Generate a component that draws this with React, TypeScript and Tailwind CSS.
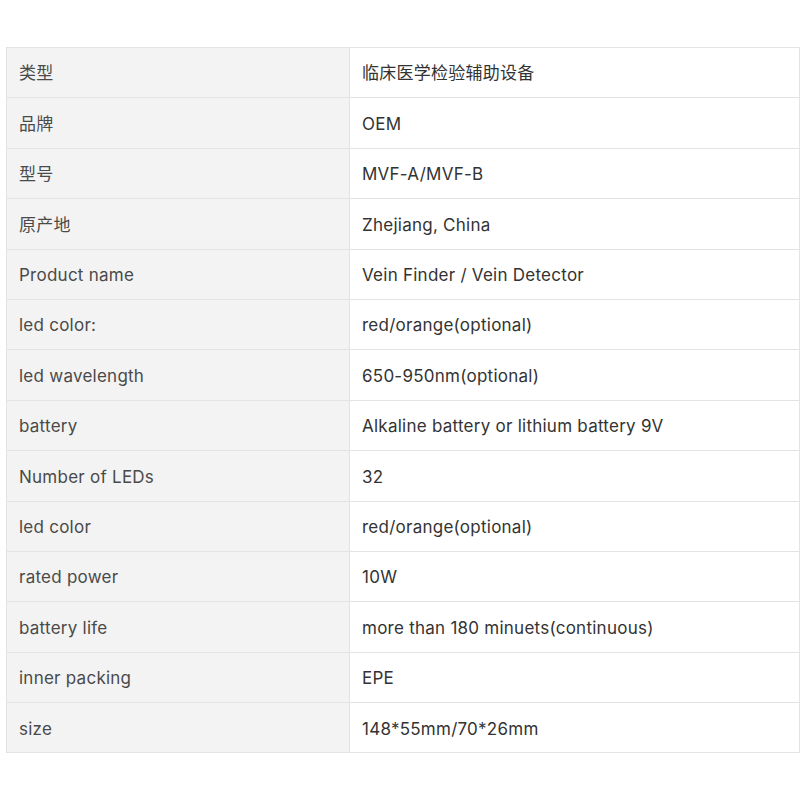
const rows: [string, string][] = [
  ["类型", "临床医学检验辅助设备"],
  ["品牌", "OEM"],
  ["型号", "MVF-A/MVF-B"],
  ["原产地", "Zhejiang, China"],
  ["Product name", "Vein Finder / Vein Detector"],
  ["led color:", "red/orange(optional)"],
  ["led wavelength", "650-950nm(optional)"],
  ["battery", "Alkaline battery or lithium battery 9V"],
  ["Number of LEDs", "32"],
  ["led color", "red/orange(optional)"],
  ["rated power", "10W"],
  ["battery life", "more than 180 minuets(continuous)"],
  ["inner packing", "EPE"],
  ["size", "148*55mm/70*26mm"],
]

export default function App() {
  return (
    <div
      className="w-[800px] h-[800px] bg-white pt-[47px] pl-[6px]"
      style={{ fontFamily: 'Inter, "Noto Sans CJK SC", sans-serif' }}
    >
      <table className="w-[794px] border-collapse text-[17px] tracking-[0.25px] text-[#333]">
        <tbody>
          {rows.map(([k, v], i) => (
            <tr key={i} className="h-[50.4px]">
              <td className="w-[343px] border border-[#e3e3e3] bg-[#f3f3f3] pl-[12px] pt-[3px] align-middle text-[#4a4a4a]">{k}</td>
              <td className="border border-[#e3e3e3] bg-white pl-[12px] pt-[3px] align-middle">{v}</td>
            </tr>
          ))}
        </tbody>
      </table>
    </div>
  )
}
